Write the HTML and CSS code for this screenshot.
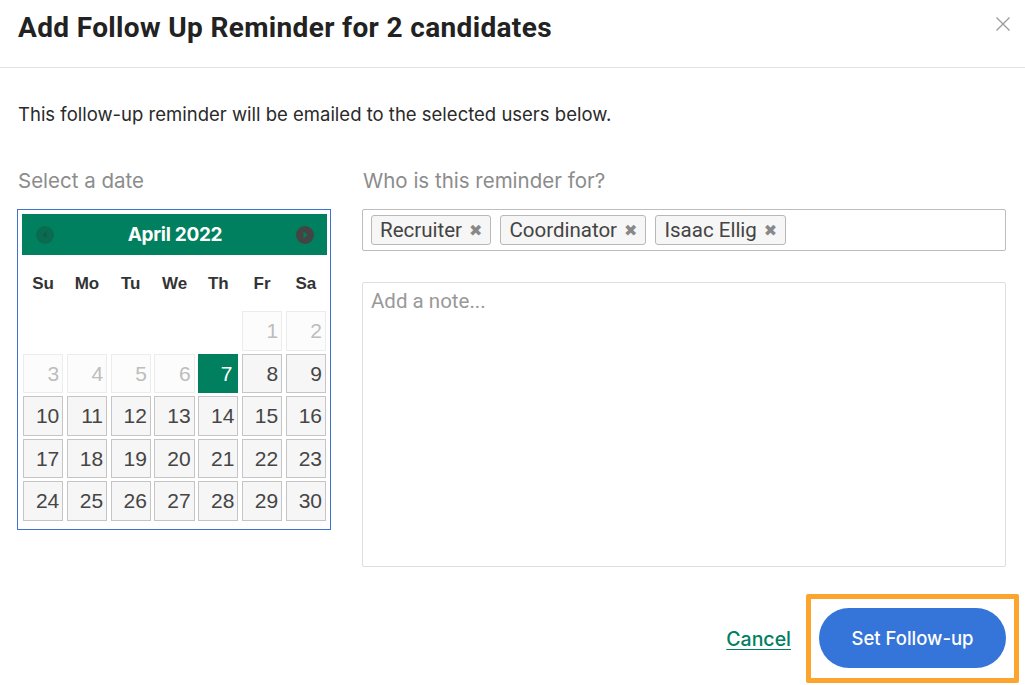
FILE: index.html
```html
<!DOCTYPE html>
<html>
<head>
<meta charset="utf-8">
<link rel="stylesheet" href="styles.css">
</head>
<body>
<div class="modal">
  <header class="modal-header">
    <h1 class="title">Add Follow Up Reminder for 2 candidates</h1>
    <button class="close" aria-label="Close">
      <svg width="16" height="16" viewBox="0 0 16 16"><path d="M1.5 1.5 L14.5 14.5 M14.5 1.5 L1.5 14.5" stroke="#9a9a9a" stroke-width="1.3" fill="none"/></svg>
    </button>
  </header>
  <div class="modal-body">
    <p class="intro">This follow-up reminder will be emailed to the selected users below.</p>
    <div class="columns">
      <div class="col-left">
        <div class="label">Select a date</div>
        <div class="calendar">
          <div class="cal-head">
            <span class="nav prev"><svg width="18" height="18" viewBox="0 0 18 18"><circle cx="9" cy="9" r="9" fill="#0b6b51"/><path d="M10.5 5.5 L6.5 9 L10.5 12.5 Z" fill="#08604a"/></svg></span>
            <span class="cal-title">April 2022</span>
            <span class="nav next"><svg width="18" height="18" viewBox="0 0 18 18"><circle cx="9" cy="9" r="9" fill="#444444"/><path d="M7.5 5.5 L11.5 9 L7.5 12.5 Z" fill="#0a7a5a"/></svg></span>
          </div>
          <div class="dow">
            <span>Su</span><span>Mo</span><span>Tu</span><span>We</span><span>Th</span><span>Fr</span><span>Sa</span>
          </div>
          <div class="days">
            <span class="blank"></span><span class="blank"></span><span class="blank"></span><span class="blank"></span><span class="blank"></span>
            <span class="day off">1</span><span class="day off">2</span>
            <span class="day off">3</span><span class="day off">4</span><span class="day off">5</span><span class="day off">6</span>
            <span class="day sel">7</span><span class="day">8</span><span class="day">9</span>
            <span class="day">10</span><span class="day">11</span><span class="day">12</span><span class="day">13</span><span class="day">14</span><span class="day">15</span><span class="day">16</span>
            <span class="day">17</span><span class="day">18</span><span class="day">19</span><span class="day">20</span><span class="day">21</span><span class="day">22</span><span class="day">23</span>
            <span class="day">24</span><span class="day">25</span><span class="day">26</span><span class="day">27</span><span class="day">28</span><span class="day">29</span><span class="day">30</span>
          </div>
        </div>
      </div>
      <div class="col-right">
        <div class="label">Who is this reminder for?</div>
        <div class="tags">
          <span class="tag">Recruiter <span class="x">&#10006;</span></span>
          <span class="tag">Coordinator <span class="x">&#10006;</span></span>
          <span class="tag">Isaac Ellig <span class="x">&#10006;</span></span>
        </div>
        <div class="note">Add a note...</div>
      </div>
    </div>
    <div class="footer">
      <a class="cancel" href="#">Cancel</a>
      <div class="highlight">
        <button class="primary">Set Follow-up</button>
      </div>
    </div>
  </div>
</div>
</body>
</html>
```
FILE: styles.css
```css
* { box-sizing: border-box; }
html, body { margin: 0; padding: 0; background: #fff; }
body { font-family: "Inter", "Liberation Sans", sans-serif; color: #222; width: 1025px; height: 685px; overflow: hidden; }

.modal-header {
  height: 68px;
  border-bottom: 1px solid #e3e3e3;
  display: flex;
  align-items: flex-start;
  justify-content: space-between;
  padding: 11px 14px 0 18px;
}
.title {
  margin: 0;
  font-family: "Roboto", "Liberation Sans", sans-serif;
  font-weight: 700;
  font-size: 28px;
  line-height: 34px;
  color: #222;
  letter-spacing: 0.35px;
}
.close {
  border: 0;
  background: none;
  padding: 0;
  margin-top: 5px;
  width: 16px;
  height: 16px;
}

.modal-body { padding: 0 19px 0 17px; }
.intro {
  margin: 34px 0 0 1px;
  font-size: 18.5px;
  line-height: 24px;
  color: #2a2a2a;
}
.columns {
  display: flex;
  gap: 31px;
  margin-top: 43px;
}
.col-left { width: 314px; }
.col-right { flex: 1; }
.label {
  font-size: 20.5px;
  line-height: 24px;
  color: #8c8c8c;
  margin: 0 0 16px 1px;
}

.calendar {
  border: 1px solid #3d72d0;
  padding: 4px 3px 8px 4px;
}
.cal-head {
  background: #00805e;
  height: 41px;
  display: flex;
  align-items: center;
  justify-content: space-between;
  padding: 0 13px 0 14px;
}
.nav { width: 18px; height: 18px; display: block; }
.nav svg { display: block; }
.cal-title {
  color: #fff;
  font-weight: 700;
  font-size: 19px;
  letter-spacing: -0.3px;
}
.dow, .days {
  display: grid;
  grid-template-columns: repeat(7, 1fr);
  column-gap: 3.5px;
  padding: 0 1px 0 1px;
}
.dow {
  height: 56px;
  align-items: center;
  font-family: "Liberation Sans", sans-serif;
  font-weight: 700;
  font-size: 17px;
  color: #333;
  text-align: center;
  padding-top: 1px;
}
.days { row-gap: 3px; }
.day, .blank { height: 39.5px; }
.day {
  border: 1px solid #c5c5c5;
  background: #f6f6f6;
  font-family: "Liberation Sans", sans-serif;
  font-size: 21px;
  color: #454545;
  text-align: right;
  padding: 0 3px 0 0;
  line-height: 37px;
}
.day.off {
  border-color: #ececec;
  background: #fcfcfc;
  color: #bdbdbd;
}
.day.sel {
  background: #00805e;
  border-color: #00805e;
  color: #fff;
  padding-right: 5px;
}

.tags {
  border: 1px solid #bdbdbd;
  border-radius: 2px;
  height: 42px;
  padding: 5px 8px;
  display: flex;
  gap: 9px;
}
.tag {
  display: flex;
  align-items: center;
  height: 30px;
  padding: 0 8px 0 8px;
  border: 1px solid #b8b8b8;
  border-radius: 3px;
  background: #f6f6f6;
  font-family: "Roboto", "Liberation Sans", sans-serif;
  font-size: 20.5px;
  color: #444;
  gap: 7px;
}
.x { font-size: 16px; color: #888; font-family: "DejaVu Sans", sans-serif; }

.note {
  margin-top: 31px;
  height: 285px;
  border: 1px solid #dedede;
  border-radius: 2px;
  padding: 6px 8px;
  font-family: "Roboto", "Liberation Sans", sans-serif;
  font-size: 20.5px;
  color: #999;
}

.footer {
  display: flex;
  justify-content: flex-end;
  align-items: center;
  margin-top: 27px;
  margin-right: -13px;
  gap: 15px;
}
.cancel {
  color: #00805e;
  font-size: 19.5px;
  font-weight: 500;
  text-decoration: underline;
  text-underline-offset: 3px;
}
.highlight {
  border: 5px solid #fba42e;
  border-radius: 2px;
  padding: 9px 8px 10px 8px;
}
.primary {
  display: block;
  width: 187px;
  height: 60px;
  border: 0;
  border-radius: 30px;
  background: #3574d8;
  color: #fff;
  font-family: "Inter", "Liberation Sans", sans-serif;
  font-size: 18.5px;
  font-weight: 500;
}
```
